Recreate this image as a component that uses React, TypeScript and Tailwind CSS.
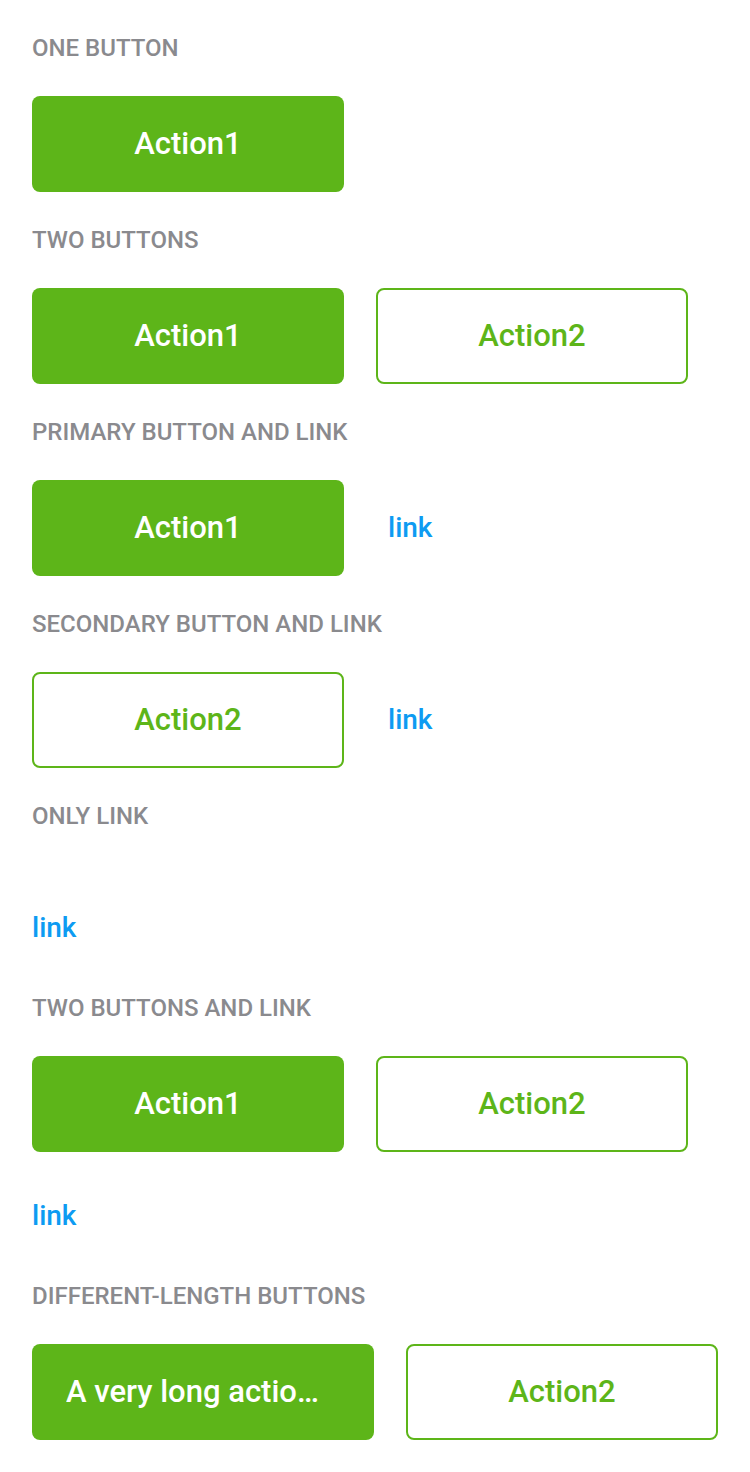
import React from "react";

const font = { fontFamily: "Roboto, 'Noto Sans', sans-serif" };

function Label({ children }: { children: React.ReactNode }) {
  return (
    <div className="h-[96px] flex items-center text-[24px] font-medium uppercase text-[#8a8a8e]">
      {children}
    </div>
  );
}

function Primary({
  children,
  w = "w-[312px]",
  pad = "px-[34px]",
}: {
  children: React.ReactNode;
  w?: string;
  pad?: string;
}) {
  return (
    <div
      className={`${w} ${pad} h-[96px] shrink-0 rounded-[8px] bg-[#5db519] text-white text-[31px] font-medium flex items-center justify-center`}
    >
      <span className="truncate">{children}</span>
    </div>
  );
}

function Secondary({ children }: { children: React.ReactNode }) {
  return (
    <div className="w-[312px] h-[96px] shrink-0 rounded-[8px] border-2 border-[#5db519] bg-white text-[#5db519] text-[31px] font-medium flex items-center justify-center">
      {children}
    </div>
  );
}

function Link() {
  return <span className="text-[28px] font-medium text-[#0d9bf2]">link</span>;
}

export default function App() {
  return (
    <div className="w-[750px] min-h-[1472px] bg-white px-[32px] pb-[32px]" style={font}>
      <Label>One button</Label>
      <div className="flex gap-[32px]">
        <Primary>Action1</Primary>
      </div>

      <Label>Two buttons</Label>
      <div className="flex gap-[32px]">
        <Primary>Action1</Primary>
        <Secondary>Action2</Secondary>
      </div>

      <Label>Primary button and link</Label>
      <div className="flex items-center gap-[44px]">
        <Primary>Action1</Primary>
        <Link />
      </div>

      <Label>Secondary button and link</Label>
      <div className="flex items-center gap-[44px]">
        <Secondary>Action2</Secondary>
        <Link />
      </div>

      <Label>Only link</Label>
      <div className="h-[96px] pt-[32px] flex items-center">
        <Link />
      </div>

      <Label>Two buttons and link</Label>
      <div className="flex gap-[32px]">
        <Primary>Action1</Primary>
        <Secondary>Action2</Secondary>
      </div>
      <div className="h-[96px] pt-[32px] flex items-center">
        <Link />
      </div>

      <Label>Different-length buttons</Label>
      <div className="flex gap-[32px]">
        <Primary w="w-[342px]" pad="pl-[34px] pr-[40px]">
          A very long action button text
        </Primary>
        <Secondary>Action2</Secondary>
      </div>
    </div>
  );
}
